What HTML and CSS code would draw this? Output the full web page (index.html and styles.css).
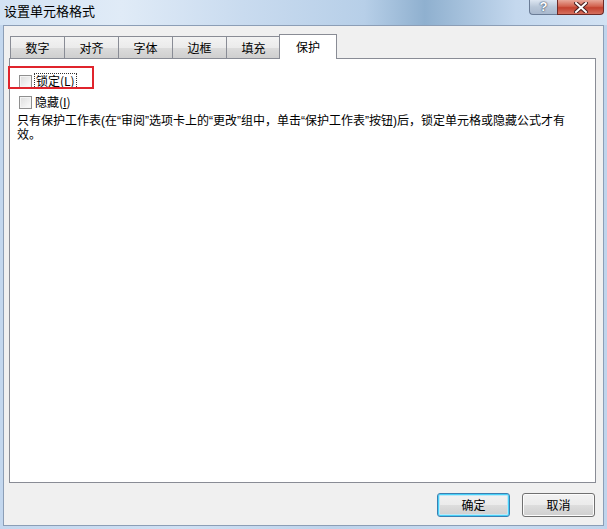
FILE: index.html
```html
<!DOCTYPE html>
<html>
<head>
<meta charset="utf-8">
<link rel="stylesheet" href="styles.css">
</head>
<body>
<div class="window">
  <div class="titlebar">
    <div class="title">设置单元格格式</div>
    <div class="caption">
      <div class="cap-help">?</div>
      <div class="cap-close">
        <svg width="14" height="11" viewBox="0 0 14 11"><path d="M2 1 L12 10 M12 1 L2 10" stroke="#4a2020" stroke-width="4" stroke-linecap="square"/><path d="M2 1 L12 10 M12 1 L2 10" stroke="#ffffff" stroke-width="2" stroke-linecap="square"/></svg>
      </div>
    </div>
  </div>
  <div class="client">
    <div class="tabs">
      <div class="tab">数字</div>
      <div class="tab">对齐</div>
      <div class="tab">字体</div>
      <div class="tab">边框</div>
      <div class="tab">填充</div>
      <div class="tab active">保护</div>
    </div>
    <div class="panel">
      <div class="highlight"></div>
      <label class="check"><span class="box"></span><span class="focus">锁定(<u>L</u>)</span></label>
      <label class="check"><span class="box"></span><span>隐藏(<u>I</u>)</span></label>
      <p class="note">只有保护工作表(在“审阅”选项卡上的“更改”组中，单击“保护工作表”按钮)后，锁定单元格或隐藏公式才有效。</p>
    </div>
    <div class="buttons">
      <div class="btn default">确定</div>
      <div class="btn">取消</div>
    </div>
  </div>
</div>
</body>
</html>
```

FILE: styles.css
```css
* { box-sizing: border-box; }
html, body { margin: 0; padding: 0; }
body {
  width: 607px;
  height: 529px;
  overflow: hidden;
  font-family: "Noto Sans CJK SC", "Liberation Sans", sans-serif;
  font-size: 12px;
  color: #000;
}
.window {
  width: 607px;
  height: 529px;
  background: linear-gradient(90deg, #c3d7ee 0%, #cfe0f3 30%, #bdd3eb 55%, #c8dbf0 80%, #bfd4ec 100%);
  display: flex;
  flex-direction: column;
}
.titlebar {
  height: 25px;
  display: flex;
  align-items: flex-start;
  background: linear-gradient(90deg, #d3e3f4 0%, #e0ebf7 20%, #c9dbef 40%, #b7cfe8 60%, #8fb0cf 70%, #c4d8ee 85%, #d2e2f3 100%);
}
.title {
  padding: 3px 0 0 4px;
  font-size: 13px;
  line-height: 16px;
  color: #000;
}
.caption {
  margin-left: auto;
  margin-right: 3px;
  display: flex;
  height: 15px;
}
.cap-help {
  width: 28px;
  height: 15px;
  border: 1px solid #6a7c96;
  border-top: none;
  border-right: none;
  border-radius: 0 0 0 4px;
  background: linear-gradient(#dde6f1, #b8c6d8 50%, #a9b9ce);
  color: #fff;
  font-family: "Liberation Sans", sans-serif;
  font-weight: bold;
  font-size: 13px;
  line-height: 14px;
  text-align: center;
  text-shadow: 0 0 2px #34465e, 0 0 1px #34465e;
}
.cap-close {
  width: 47px;
  height: 15px;
  border: 1px solid #6e2a26;
  border-top: none;
  border-radius: 0 0 4px 0;
  background: linear-gradient(#e8a89a, #d2624f 45%, #c3412f 55%, #d5705e);
  display: flex;
  align-items: center;
  justify-content: center;
}
.client {
  flex: 1;
  margin: 0 3px 3px 3px;
  background: #f0f0f0;
  border: 1px solid #8c9eb6;
  display: flex;
  flex-direction: column;
  padding: 7px 0 0 5px;
}
.tabs {
  display: flex;
  height: 25px;
  align-items: flex-end;
  padding-left: 1px;
  position: relative;
  z-index: 1;
}
.tab {
  width: 55px;
  height: 22px;
  margin-right: -1px;
  border: 1px solid #898c95;
  border-bottom: none;
  background: linear-gradient(#f3f3f3, #ebebeb 50%, #dcdcdc 51%, #cfcfcf);
  text-align: center;
  line-height: 21px;
  font-size: 12px;
}
.tab.active {
  width: 58px;
  height: 25px;
  margin-left: -1px;
  background: #fff;
  line-height: 24px;
  position: relative;
  top: 1px;
}
.panel {
  width: 587px;
  height: 425px;
  background: #fff;
  border: 1px solid #898c95;
  position: relative;
  padding: 10px 0 0 9px;
}
.highlight {
  position: absolute;
  left: -2px;
  top: 7px;
  width: 86px;
  height: 23px;
  border: 2px solid #e0242c;
}
.check {
  display: flex;
  align-items: center;
  height: 24px;
  line-height: 14px;
}
.check + .check { margin-top: -2px; height: 22px; }
.box {
  width: 13px;
  height: 13px;
  border: 1px solid #8f8f8f;
  background: linear-gradient(135deg, #dcdcdc, #f6f6f6 80%);
  box-shadow: inset 0 0 0 1px #f4f4f4;
  margin-right: 3px;
}
.focus {
  outline: 1px dotted #333;
  outline-offset: 0;
  padding: 0 1px;
}
u { text-decoration: underline; }
.note {
  margin: 1px 0 0 -2px;
  width: 570px;
  line-height: 14px;
  font-size: 12px;
  font-family: "Liberation Sans", "Noto Sans CJK SC", sans-serif;
}
.buttons {
  display: flex;
  justify-content: flex-end;
  gap: 12px;
  padding: 10px 8px 0 0;
}
.btn {
  width: 73px;
  height: 24px;
  border: 1px solid #707070;
  border-radius: 3px;
  background: linear-gradient(#f2f2f2, #ebebeb 50%, #dddddd 51%, #cfcfcf);
  box-shadow: inset 0 0 0 1px #fcfcfc;
  text-align: center;
  line-height: 22px;
  font-size: 12px;
}
.btn.default {
  border-color: #3c7fb1;
  box-shadow: inset 0 0 0 1px #48d1f8, inset 0 0 0 2px #bfe7f7;
}
```
